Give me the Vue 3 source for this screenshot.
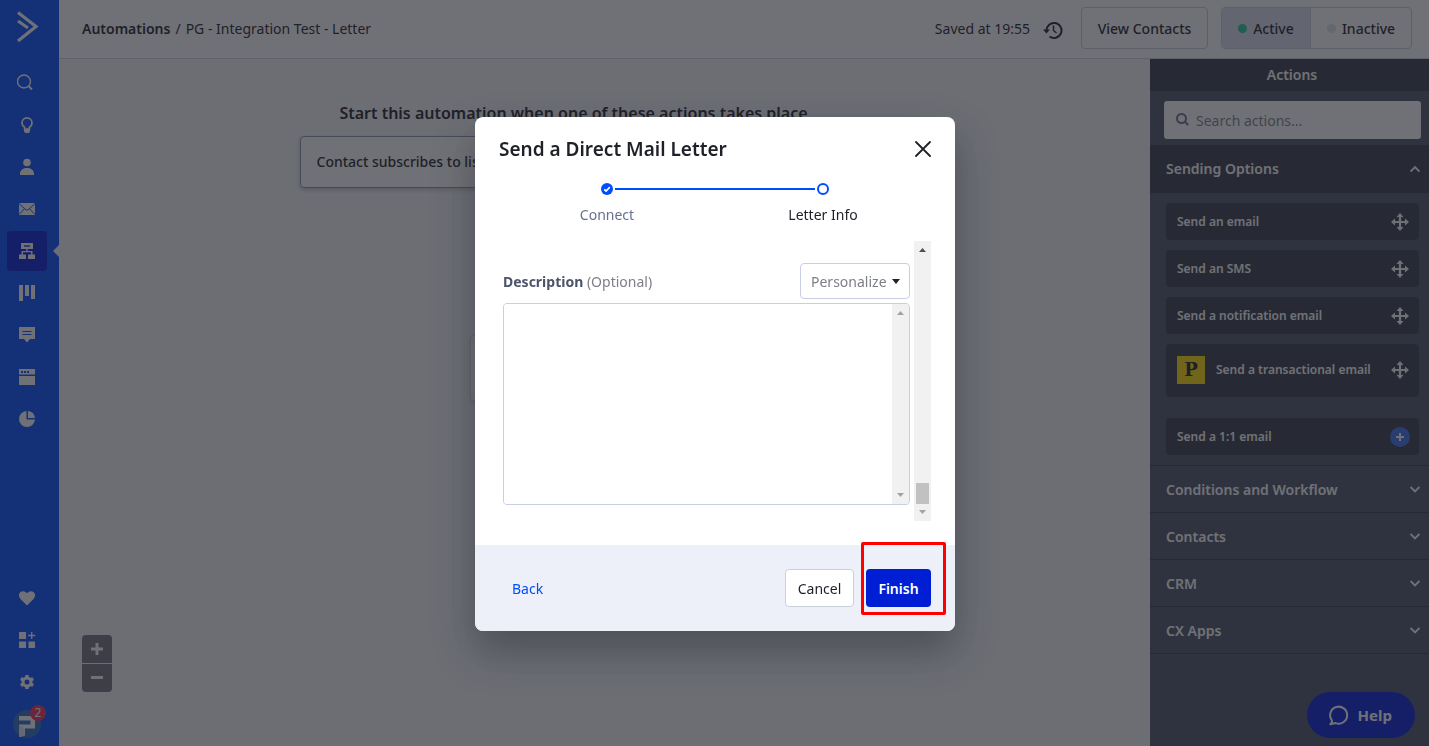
<template>
  <div class="app">
    <aside class="sidebar">
      <a href="#" class="logo" aria-label="Home">
        <svg width="22" height="34" viewBox="0 0 22 34" fill="none" stroke="currentColor" stroke-width="3.200">
          <path d="M1 2.500L19 16.500L1 31" />
          <path d="M1 11L11 18" stroke-width="3" />
        </svg>
      </a>
      <nav class="nav">
        <a
          v-for="item in mainNav"
          :key="item.name"
          href="#"
          class="nav-item"
          :class="{ active: item.name === activeNav }"
          :aria-label="item.name"
          @click.prevent="activeNav = item.name"
        >
          <svg width="20" height="20" viewBox="0 0 20 20" fill="currentColor" v-html="item.icon"></svg>
        </a>
      </nav>
      <nav class="nav nav-bottom">
        <a v-for="item in bottomNav" :key="item.name" href="#" class="nav-item" :aria-label="item.name">
          <svg width="20" height="20" viewBox="0 0 20 20" fill="currentColor" v-html="item.icon"></svg>
        </a>
        <a href="#" class="nav-item account" aria-label="Account">
          <svg width="28" height="28" viewBox="0 0 28 28">
            <circle cx="14" cy="14" r="14" fill="#2f6cc8" />
            <path d="M6 6H22V18.500H12V25.500L6 27V14.500H17.500V10.500H6Z" fill="#fff" />
            <path d="M6 14.500L11.500 18.500V26L6 27Z" fill="#dce6f7" />
          </svg>
          <span class="badge">2</span>
        </a>
      </nav>
    </aside>

    <div class="page">
      <header class="topbar">
        <div class="breadcrumb">
          <a href="#" class="crumb-link">Automations</a>
          <span>/</span>
          <span>PG - Integration Test - Letter</span>
        </div>
        <span class="saved">Saved at 19:55</span>
        <button class="history-btn" aria-label="History">
          <svg width="20" height="20" viewBox="0 0 20 20" fill="none" stroke="currentColor" stroke-width="2">
            <path d="M3.500 11A7.500 7.500 0 1 1 6.500 16.500" />
            <path d="M0 9.500H7L3.500 13.500Z" fill="currentColor" stroke="none" />
            <path d="M10.500 5.500V10.500L13.500 13" stroke-width="1.500" />
          </svg>
        </button>
        <button class="view-btn">View Contacts</button>
        <div class="status">
          <button class="status-btn" :class="{ on: active }" @click="active = true">
            <i class="dot green"></i>Active
          </button>
          <button class="status-btn inactive" :class="{ on: !active }" @click="active = false">
            <i class="dot"></i>Inactive
          </button>
        </div>
      </header>

      <div class="workspace">
        <main class="canvas">
          <h2 class="canvas-title">Start this automation when one of these actions takes place</h2>
          <div class="trigger">Contact subscribes to list</div>
          <div class="step-card"></div>
          <div class="zoom">
            <button aria-label="Zoom in">
              <svg width="12" height="12" viewBox="0 0 12 12"><path d="M4.500 0h3v4.500H12v3H7.500V12h-3V7.500H0v-3h4.500Z" fill="currentColor" /></svg>
            </button>
            <button aria-label="Zoom out">
              <svg width="12" height="12" viewBox="0 0 12 12"><path d="M0 4h12v3H0Z" fill="currentColor" /></svg>
            </button>
          </div>
        </main>

        <aside class="panel">
          <div class="panel-title">Actions</div>
          <div class="search">
            <svg width="14" height="14" viewBox="0 0 14 14" fill="none" stroke="currentColor" stroke-width="2">
              <circle cx="5.500" cy="5.500" r="4.500" />
              <path d="M8.800 8.800L12.300 12" />
            </svg>
            <input v-model="query" type="text" placeholder="Search actions..." aria-label="Search actions" />
          </div>
          <button class="section open">
            <span>Sending Options</span>
            <svg width="10" height="10" viewBox="0 0 10 10" fill="none" stroke="currentColor" stroke-width="1.900"><path d="M0.500 7.500L5 3L9.500 7.500" /></svg>
          </button>
          <div class="action-list">
            <div v-for="item in actions" :key="item.label" class="action" :class="item.type">
              <span v-if="item.type === 'postmark'" class="postmark-logo">P</span>
              <span class="action-label">{{ item.label }}</span>
              <svg v-if="item.type !== 'add'" width="18" height="18" viewBox="0 0 18 18" fill="currentColor">
                <path d="M9 0L12.500 4H10.100V7.900H14V5.500L18 9L14 12.500V10.100H10.100V14H12.500L9 18L5.500 14H7.900V10.100H4V12.500L0 9L4 5.500V7.900H7.900V4H5.500Z" />
              </svg>
              <svg v-else width="20" height="20" viewBox="0 0 20 20">
                <circle cx="10" cy="10" r="10" fill="#3b70ed" />
                <path d="M10 6V14M6 10H14" stroke="#fff" stroke-width="2" />
              </svg>
            </div>
          </div>
          <button v-for="name in sections" :key="name" class="section">
            <span>{{ name }}</span>
            <svg width="10" height="10" viewBox="0 0 10 10" fill="none" stroke="currentColor" stroke-width="1.900"><path d="M0.500 3L5 7.500L9.500 3" /></svg>
          </button>
        </aside>
      </div>
    </div>

    <button class="help">
      <svg width="22" height="22" viewBox="0 0 22 22" fill="none" stroke="currentColor" stroke-width="2">
        <path d="M3.800 16.200A8.500 8.500 0 1 1 7.600 19.100L2.300 20.300Q4.600 18.600 3.800 16.200Z" stroke-linejoin="round" />
      </svg>
      Help
    </button>

    <div v-if="visible" class="overlay">
      <div class="modal" role="dialog" aria-labelledby="modal-title">
        <div class="modal-header">
          <h1 id="modal-title" class="modal-title">Send a Direct Mail Letter</h1>
          <button class="close-btn" aria-label="Close" @click="visible = false">
            <svg width="16" height="16" viewBox="0 0 16 16" stroke="currentColor" stroke-width="1.800"><path d="M1 1L15 15M15 1L1 15" stroke-linecap="round" /></svg>
          </button>
        </div>

        <div class="steps">
          <div class="step">
            <svg width="12" height="12" viewBox="0 0 12 12">
              <circle cx="6" cy="6" r="6" fill="#004cff" />
              <path d="M3.200 6.300L5.100 8L8.800 4.200" fill="none" stroke="#fff" stroke-width="1.700" />
            </svg>
            <span class="step-label">Connect</span>
          </div>
          <div class="step current">
            <svg width="12" height="12" viewBox="0 0 12 12"><circle cx="6" cy="6" r="5" fill="#fff" stroke="#004cff" stroke-width="2" /></svg>
            <span class="step-label">Letter Info</span>
          </div>
        </div>

        <div class="modal-body">
          <div class="field">
            <div class="field-head">
              <label for="description"><b>Description</b> (Optional)</label>
              <div class="personalize">
                <select aria-label="Personalize">
                  <option>Personalize</option>
                </select>
                <svg width="8" height="5" viewBox="0 0 8 5"><path d="M0 0H8L4 5Z" fill="#1f2129" /></svg>
              </div>
            </div>
            <div class="textarea-wrap">
              <textarea id="description" v-model="description"></textarea>
              <div class="scrollbar">
                <svg width="7" height="4" viewBox="0 0 7 4"><path d="M0 4L3.500 0L7 4Z" /></svg>
                <svg width="7" height="4" viewBox="0 0 7 4"><path d="M0 0L3.500 4L7 0Z" /></svg>
              </div>
            </div>
          </div>
          <div class="scrollbar">
            <svg class="dark" width="7" height="4" viewBox="0 0 7 4"><path d="M0 4L3.500 0L7 4Z" /></svg>
            <i class="thumb"></i>
            <svg width="7" height="4" viewBox="0 0 7 4"><path d="M0 0L3.500 4L7 0Z" /></svg>
          </div>
        </div>

        <div class="modal-footer">
          <button class="btn link">Back</button>
          <button class="btn cancel" @click="visible = false">Cancel</button>
          <div class="finish-wrap">
            <button class="btn primary">Finish</button>
            <span class="highlight"></span>
          </div>
        </div>
      </div>
    </div>
  </div>
</template>

<script setup>
import { ref } from 'vue';

const visible = ref(true);
const active = ref(true);
const activeNav = ref('Automations');
const query = ref('');
const description = ref('');

const mainNav = [
  { name: 'Search', icon: '<circle cx="7" cy="8.500" r="6.500" fill="none" stroke="currentColor" stroke-width="1.400"/><path d="M11.500 13L15 16.500" stroke="currentColor" stroke-width="2"/>' },
  { name: 'Ideas', icon: '<path d="M7.600 14V12.200C5.800 11.200 5 9.600 5 7.800A5 5 0 0 1 15 7.800C15 9.600 14.200 11.200 12.400 12.200V14Z" fill="none" stroke="currentColor" stroke-width="1.700"/><path d="M7 14H13V16L12 18H8L7 16Z"/>' },
  { name: 'Contacts', icon: '<circle cx="10" cy="5.500" r="3.800"/><path d="M3 18V16.500C3 13 6.500 11 10 11S17 13 17 16.500V18Z"/>' },
  { name: 'Campaigns', icon: '<path d="M2 4H18V16H2Z"/><path d="M2 4.500L8.500 10.500Q10 11.700 11.500 10.500L18 4.500M2 15.500L7.300 10M18 15.500L12.700 10" fill="none" stroke="#004cff" stroke-width="1"/>' },
  { name: 'Automations', icon: '<path d="M4 2H16V8H10.700V10H15.500V13.500H18V18H11V13.500H14V11.300H6V13.500H9V18H2V13.500H4.600V10H9.300V8H4Z"/><path d="M7 5H13" stroke="#001cd5" stroke-width="1.300"/>' },
  { name: 'Deals', icon: '<path d="M2 2H6V18H2ZM8 2H12V13H8ZM14 2H18V16H14Z"/>' },
  { name: 'Conversations', icon: '<path d="M2 2H18V14H13L10 17.500L7 14H2Z"/><path d="M5.500 6.500H14.500M5.500 9.500H14.500" stroke="#004cff" stroke-width="1.200"/>' },
  { name: 'Website', icon: '<path d="M2 2H18V7.500H2ZM2 9H18V18H2Z"/><path d="M4 5H12" stroke="#004cff" stroke-width="2" stroke-dasharray="2 1"/>' },
  { name: 'Reports', icon: '<path d="M9.500 2V10.500H18A8 8 0 1 1 9.500 2Z"/><path d="M11 2A8 8 0 0 1 18 9H11Z"/>' }
];

const bottomNav = [
  { name: 'Favorites', icon: '<path d="M10 17.500L3.500 11C1.500 9 1.500 6 3 4.500C5 2.500 8 2.800 10 5.300C12 2.800 15 2.500 17 4.500C18.500 6 18.500 9 16.500 11Z"/>' },
  { name: 'Apps', icon: '<path d="M2 2H9V9H2ZM2 11.500H9V18H2ZM11.500 11.500H18V18H11.500Z"/><path d="M14.700 2V9M11.200 5.500H18.200" stroke="currentColor" stroke-width="1.300"/>' },
  { name: 'Settings', icon: '<circle cx="10" cy="10" r="4" fill="none" stroke="currentColor" stroke-width="3"/><path d="M10 3V6M10 14V17M3.900 6.500L6.500 8M13.500 12L16.100 13.500M3.900 13.500L6.500 12M13.500 8L16.100 6.500" stroke="currentColor" stroke-width="3.400"/>' }
];

const actions = [
  { label: 'Send an email', type: 'move' },
  { label: 'Send an SMS', type: 'move' },
  { label: 'Send a notification email', type: 'move' },
  { label: 'Send a transactional email', type: 'postmark' },
  { label: 'Send a 1:1 email', type: 'add' }
];

const sections = ['Conditions and Workflow', 'Contacts', 'CRM', 'CX Apps'];
</script>

<style>
body {
  margin: 0;
}
</style>

<style scoped>
.app {
  display: flex;
  height: 100vh;
  overflow: hidden;
  font-family: "Noto Sans", "Open Sans", sans-serif;
  font-size: 14px;
  color: #1f2129;
}

.app * {
  box-sizing: border-box;
}

button,
input,
select,
textarea {
  font: inherit;
  color: inherit;
}

button {
  padding: 0;
  border: none;
  background: none;
  cursor: pointer;
}

a {
  color: inherit;
  text-decoration: none;
}

svg {
  display: block;
  flex: none;
}

/* sidebar */
.sidebar {
  display: flex;
  flex-direction: column;
  flex: none;
  width: 59px;
  padding-bottom: 2px;
  background: #004cff;
  color: #fff;
}

.logo {
  padding: 10px 0 19px 17px;
}

.nav {
  display: flex;
  flex-direction: column;
  gap: 2px;
  padding-left: 7px;
}

.nav-bottom {
  margin-top: auto;
}

.nav-item {
  position: relative;
  display: flex;
  align-items: center;
  justify-content: center;
  width: 40px;
  height: 40px;
  border-radius: 4px;
}

.nav-item.active {
  background: #001cd5;
}

.nav-item.active::after {
  content: "";
  position: absolute;
  right: -12px;
  border: 6px solid transparent;
  border-left-width: 0;
  border-right-color: #f3f5fa;
}

.badge {
  position: absolute;
  top: 1px;
  right: 1px;
  width: 16px;
  height: 16px;
  border-radius: 8px;
  background: #f0305c;
  font-size: 12px;
  line-height: 16px;
  text-align: center;
}

/* top bar */
.page {
  display: flex;
  flex: 1;
  flex-direction: column;
  min-width: 0;
}

.topbar {
  display: flex;
  align-items: center;
  flex: none;
  height: 59px;
  padding: 0 17px 2px 23px;
  border-bottom: 1px solid #d0d4e4;
  background: #fff;
}

.breadcrumb {
  display: flex;
  flex: 1;
  gap: 5px;
}

.crumb-link {
  font-weight: 600;
}

.history-btn {
  padding: 4px 0 0;
  margin: 0 18px 0 13px;
}

.view-btn,
.status {
  height: 42px;
  border: 1px solid #c9cfe0;
  border-radius: 4px;
  font-weight: 500;
}

.view-btn {
  width: 127px;
  margin-right: 13px;
}

.status {
  display: flex;
  overflow: hidden;
}

.status-btn {
  display: flex;
  align-items: center;
  justify-content: center;
  gap: 6px;
  width: 88px;
  font-weight: 500;
}

.status-btn.inactive {
  width: 101px;
  border-left: 1px solid #c9cfe0;
}

.status-btn.on {
  background: #dce1f0;
}

.dot {
  width: 9px;
  height: 9px;
  border-radius: 50%;
  background: #dfe2ec;
}

.dot.green {
  background: #24c99a;
}

/* canvas */
.workspace {
  display: flex;
  flex: 1;
  min-height: 0;
}

.canvas {
  position: relative;
  display: flex;
  flex: 1;
  flex-direction: column;
  align-items: center;
  padding: 42px 62px 0 0;
  background: #f3f5fa;
}

.canvas-title {
  margin: 0 0 11px;
  font-size: 16px;
  line-height: 24px;
  font-weight: 600;
}

.trigger {
  width: 548px;
  padding: 0 16px;
  border: 1px solid #8b93ae;
  border-radius: 4px;
  background: #fff;
  box-shadow: 0 2px 4px rgba(0, 0, 0, 0.2);
  font-weight: 500;
  line-height: 50px;
}

.step-card {
  width: 208px;
  height: 66px;
  margin-top: 147px;
  border: 1px solid #d9dce6;
  border-radius: 4px;
  background: #fff;
  box-shadow: 0 2px 4px rgba(0, 0, 0, 0.1);
}

.zoom {
  position: absolute;
  left: 23px;
  bottom: 54px;
  display: flex;
  flex-direction: column;
  gap: 1px;
  overflow: hidden;
  border-radius: 4px;
}

.zoom button {
  display: flex;
  align-items: center;
  justify-content: center;
  width: 30px;
  height: 28px;
  background: #71737c;
  color: #fff;
}

/* actions panel */
.panel {
  flex: none;
  width: 279px;
  background: #4c546a;
  color: #fff;
  font-weight: 600;
}

.panel-title {
  padding-left: 5px;
  background: #353b4c;
  line-height: 32px;
  text-align: center;
}

.search {
  display: flex;
  align-items: center;
  gap: 6px;
  height: 38px;
  margin: 10px 8px 6px 14px;
  padding: 0 12px;
  border-radius: 3px;
  background: #fff;
  color: #6a708a;
  font-weight: 400;
}

.search input {
  flex: 1;
  min-width: 0;
  padding: 0;
  border: none;
  outline: none;
  background: none;
}

.search input::placeholder {
  color: #7d8290;
  opacity: 1;
}

.section {
  display: flex;
  align-items: center;
  justify-content: space-between;
  width: 100%;
  height: 47px;
  padding: 0 9px 0 16px;
  border-bottom: 1px solid #353b4c;
  font-weight: 600;
}

.section.open {
  height: 48px;
  background: #353b4c;
}

.action-list {
  display: flex;
  flex-direction: column;
  gap: 10px;
  padding: 10px 10px 10px 16px;
  border-bottom: 1px solid #353b4c;
}

.action {
  display: flex;
  align-items: center;
  height: 37px;
  padding: 0 10px 0 11px;
  border-radius: 4px;
  background: #353b4c;
  font-size: 12px;
}

.action.postmark {
  height: 53px;
  padding-bottom: 2px;
}

.action.add {
  margin-top: 11px;
  padding-right: 9px;
}

.action-label {
  flex: 1;
}

.postmark-logo {
  width: 28px;
  height: 28px;
  margin-right: 11px;
  background: #ffde00;
  color: #1f2129;
  font-family: "DejaVu Serif", serif;
  font-size: 18px;
  font-weight: 700;
  line-height: 28px;
  text-align: center;
}

.help {
  position: fixed;
  right: 14px;
  bottom: 8px;
  display: flex;
  align-items: center;
  gap: 8px;
  height: 46px;
  padding: 0 23px 0 21px;
  border-radius: 23px;
  background: #001cd5;
  color: #fff;
  font-size: 15px;
  font-weight: 700;
}

/* modal */
.overlay {
  position: fixed;
  inset: 0;
  z-index: 10;
  display: flex;
  align-items: center;
  justify-content: center;
  padding: 2px 0 0 1px;
  background: rgba(31, 33, 41, 0.64);
}

.modal {
  width: 480px;
  border-radius: 8px;
  background: #fff;
  box-shadow: 0 20px 40px rgba(31, 33, 41, 0.4);
}

.modal-header {
  display: flex;
  align-items: center;
  justify-content: space-between;
  padding: 18px 24px 0;
}

.modal-title {
  margin: 0;
  font-size: 19px;
  font-weight: 600;
  line-height: 28px;
}

.steps {
  position: relative;
  display: flex;
  justify-content: center;
  margin-top: 20px;
}

.steps::before {
  content: "";
  position: absolute;
  top: 5px;
  left: 50%;
  width: 200px;
  height: 2px;
  margin-left: -100px;
  background: #004cff;
}

.step {
  display: flex;
  flex-direction: column;
  align-items: center;
  gap: 10px;
  width: 216px;
  color: #687092;
}

.step.current {
  color: #1f2129;
}

.step-label {
  line-height: 20px;
}

.modal-body {
  display: flex;
  height: 280px;
  margin: 16px 24px 24px;
}

.field {
  flex: 1;
  padding: 22px 4px 0;
}

.field-head {
  display: flex;
  align-items: center;
  justify-content: space-between;
  margin-bottom: 4px;
  color: #7d7f87;
}

.field-head b {
  color: #4c546a;
}

.personalize {
  position: relative;
}

.personalize select {
  width: 110px;
  height: 36px;
  padding: 0 10px;
  border: 1px solid #c9cfe2;
  border-radius: 4px;
  outline: none;
  appearance: none;
  background: #fff;
}

.personalize svg {
  position: absolute;
  top: 16px;
  right: 10px;
  pointer-events: none;
}

.textarea-wrap {
  display: flex;
  height: 202px;
  overflow: hidden;
  border: 1px solid #c9cfe2;
  border-radius: 4px;
}

.textarea-wrap textarea {
  flex: 1;
  padding: 8px;
  border: none;
  outline: none;
  resize: none;
}

.scrollbar {
  display: flex;
  flex-direction: column;
  align-items: center;
  justify-content: space-between;
  flex: none;
  width: 17px;
  padding: 7px 0;
  background: #f1f1f1;
  fill: #a3a3a3;
}

.scrollbar .dark {
  fill: #505050;
}

.thumb {
  width: 13px;
  height: 21px;
  margin: auto 0 6px;
  background: #c1c1c1;
}

.modal-footer {
  display: flex;
  align-items: center;
  padding: 24px;
  border-radius: 0 0 8px 8px;
  background: #edf0f8;
}

.btn {
  height: 38px;
  padding: 0 13px;
  border-radius: 4px;
}

.btn.link {
  margin-right: auto;
  color: #004cff;
}

.btn.cancel {
  width: 69px;
  padding: 0;
  margin-right: 12px;
  border: 1px solid #c9cfdd;
  background: #fff;
}

.btn.primary {
  width: 65px;
  padding: 0;
  background: #001fd4;
  color: #fff;
  font-weight: 600;
}

.finish-wrap {
  position: relative;
}

.highlight {
  position: absolute;
  top: -27px;
  right: -15px;
  bottom: -8px;
  left: -5px;
  border: 3px solid #f00;
  border-radius: 2px;
  pointer-events: none;
}
</style>
